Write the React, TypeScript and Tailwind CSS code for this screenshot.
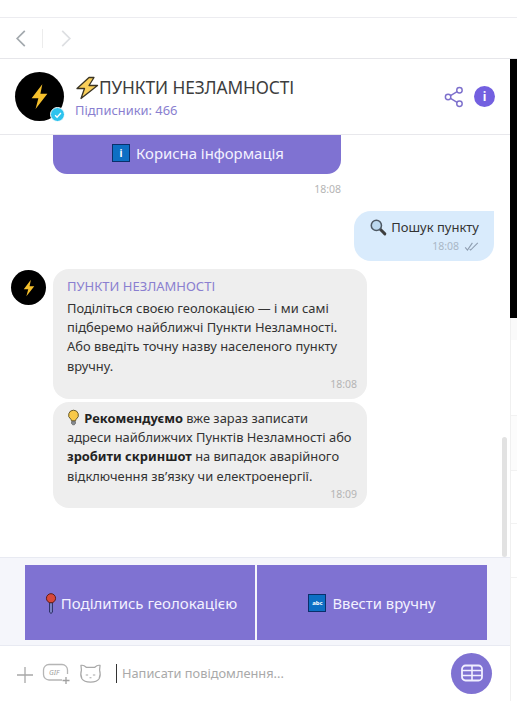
const font = { fontFamily: '"Noto Sans", "Open Sans", sans-serif' };

function Bolt({ className }: { className: string }) {
  return (
    <svg viewBox="0 0 24 24" className={className}>
      <path d="M14.5 1 5 13.5h6L8.5 23 19 9.5h-6.2L14.5 1z" fill="#f5c02c" />
    </svg>
  );
}

function TitleBolt() {
  return (
    <svg viewBox="0 0 24 24" className="w-[24px] h-[24px] shrink-0">
      <path d="M14 1.500 2 12.500h7.500L6 22.500 22.500 9.500H14L19 1.500z" fill="#f9cf5a" stroke="#3a3424" strokeWidth="1.300" strokeLinejoin="round" />
    </svg>
  );
}

function BlueSquare({ label, tiny }: { label: string; tiny?: boolean }) {
  return (
    <span className="w-[18px] h-[18px] bg-[#0d6fc4] border border-[#0a2f6b] flex items-center justify-center shrink-0">
      <span className={tiny ? 'text-[6px] leading-none text-white font-bold' : 'text-[10px] leading-none text-white font-bold'}>{label}</span>
    </span>
  );
}

function GroupAvatar({ big }: { big?: boolean }) {
  return (
    <div className={big ? 'w-[49px] h-[49px] rounded-full bg-black flex items-center justify-center' : 'w-[35px] h-[35px] rounded-full bg-black flex items-center justify-center shrink-0'}>
      <Bolt className={big ? 'w-[27px] h-[27px]' : 'w-[18px] h-[18px]'} />
    </div>
  );
}

function Magnifier() {
  return (
    <svg viewBox="0 0 20 20" className="w-[17px] h-[17px] shrink-0">
      <path d="m11.500 11.500 6 6" stroke="#3f3f3f" strokeWidth="3.400" strokeLinecap="round" />
      <circle cx="7.500" cy="7.500" r="6" fill="#bcd8ee" stroke="#4e5964" strokeWidth="1.800" />
    </svg>
  );
}

function Bulb() {
  return (
    <svg viewBox="0 0 16 20" className="w-[13px] h-[17px] inline-block align-[-3px] mr-[1px]">
      <path d="M8 1a6 6 0 0 0-3.500 10.900c.6.5.9 1.200.9 2.100h5.200c0-.9.3-1.600.9-2.100A6 6 0 0 0 8 1z" fill="#f8c94a" stroke="#4a3d14" strokeWidth="1" />
      <path d="M5.600 15h4.800v2.200L9 19H7l-1.400-1.800z" fill="#8a8f96" stroke="#444" strokeWidth=".7" />
    </svg>
  );
}

function Pin() {
  return (
    <svg viewBox="0 0 12 22" className="w-[12px] h-[21px] shrink-0">
      <path d="M4.600 10h2.800v10.200L6 21.400l-1.400-1.200z" fill="#8b93d8" stroke="#1c2350" strokeWidth="1" />
      <circle cx="6" cy="5.500" r="4.800" fill="#d8483a" stroke="#5b1a14" strokeWidth="1" />
    </svg>
  );
}

function App() {
  return (
    <div style={font} className="w-[517px] h-[701px] bg-white overflow-hidden flex flex-col text-[#333]">
      <div className="h-[18px] border-b border-[#ececf0] shrink-0" />
      <div className="h-[41px] border-b border-[#e6e6ea] shrink-0 flex items-center pl-[15px]">
        <svg viewBox="0 0 12 20" className="w-[12px] h-[19px]">
          <path d="M10 2 2 10l8 8" fill="none" stroke="#a3a9ae" strokeWidth="1.800" />
        </svg>
        <div className="w-px h-[19px] bg-[#ececec] ml-[15px]" />
        <svg viewBox="0 0 12 20" className="w-[12px] h-[19px] ml-[17px]">
          <path d="m2 2 8 8-8 8" fill="none" stroke="#dddfe2" strokeWidth="1.800" />
        </svg>
      </div>

      <div className="flex-1 flex min-h-0">
        <div className="w-[510px] flex flex-col min-h-0">
          <div className="h-[76px] border-b border-[#e8e8ec] shrink-0 flex items-center pl-[15px] pr-[15px]">
            <div className="relative shrink-0 mr-[11px]">
              <GroupAvatar big />
              <div className="absolute right-[-1px] bottom-[-1px] w-[15px] h-[15px] rounded-full bg-[#2dc3ee] border border-white flex items-center justify-center">
                <svg viewBox="0 0 12 12" className="w-[10px] h-[10px]">
                  <path d="m2.500 6.200 2.400 2.400 4.600-5" fill="none" stroke="#fff" strokeWidth="1.600" />
                </svg>
              </div>
            </div>
            <div className="flex-1 min-w-0">
              <div className="flex items-center h-[26px] text-[17.3px] text-[#3d3d3d] tracking-[-0.1px] whitespace-nowrap">
                <TitleBolt />
                <span>ПУНКТИ НЕЗЛАМНОСТІ</span>
              </div>
              <div className="text-[12.9px] leading-[18px] text-[#8a7fd0]">Підписники: 466</div>
            </div>
            <svg viewBox="0 0 22 24" className="w-[20px] h-[22px] mr-[10px] shrink-0">
              <g fill="none" stroke="#7d70cc" strokeWidth="1.600">
                <circle cx="17" cy="4.500" r="3" />
                <circle cx="17" cy="19.500" r="3" />
                <circle cx="4.500" cy="12" r="3" />
                <path d="m7.200 10.400 7.200-4.300M7.200 13.600l7.200 4.300" />
              </g>
            </svg>
            <div className="w-[21px] h-[21px] rounded-full bg-[#7360e0] flex items-center justify-center text-white text-[12px] font-bold shrink-0">i</div>
          </div>

          <div className="relative flex-1 min-h-0 overflow-hidden">
            <div className="ml-[53px] w-[288px] h-[39px] pb-[3px] pl-[2px] bg-[#7f72d2] rounded-b-[14px] flex items-center justify-center gap-[6px] text-[14.9px] text-[#f3f1ff]">
              <BlueSquare label="i" />
              <span>Корисна інформація</span>
            </div>
            <div className="ml-[53px] w-[288px] text-right text-[10.5px] text-[#b5b5b5] mt-[8px] leading-[14px]">18:08</div>

            <div className="mt-[15px] ml-auto mr-[16px] w-[140px] h-[50px] bg-[#d9ebfc] rounded-l-[17px] rounded-br-[17px] pr-[15px] pt-[7px] flex flex-col items-end">
              <div className="flex items-center gap-[4px] text-[13px] leading-[19px] text-[#333]">
                <Magnifier />
                <span>Пошук пункту</span>
              </div>
              <div className="flex items-center gap-[5px] text-[10.5px] leading-[14px] text-[#a9b7c6] mt-[2px]">
                <span>18:08</span>
                <svg viewBox="0 0 16 10" className="w-[15px] h-[9px]">
                  <path d="m1 6 2.500 3L9 1M6 8l1 1 8-8" fill="none" stroke="#8e9db0" strokeWidth="1.200" />
                </svg>
              </div>
            </div>

            <div className="flex mt-[8px] pl-[11px]">
              <div className="mr-[7px] mt-[1px]">
                <GroupAvatar />
              </div>
              <div className="w-[314px]">
                <div className="h-[130px] bg-[#eeeeee] rounded-[16px] px-[14px] pt-[7px]">
                  <div className="text-[13px] leading-[20px] text-[#8a7fd0]">ПУНКТИ НЕЗЛАМНОСТІ</div>
                  <div className="text-[12.9px] leading-[19.2px] mt-[3px] text-[#333] whitespace-nowrap">
                    Поділіться своєю геолокацією — і ми самі<br />
                    підберемо найближчі Пункти Незламності.<br />
                    Або введіть точну назву населеного пункту<br />
                    вручну.
                  </div>
                  <div className="text-right text-[10.5px] leading-[14px] text-[#b5b5b5] mr-[-4px] mt-[1px]">18:08</div>
                </div>
                <div className="h-[106px] bg-[#eeeeee] rounded-[16px] px-[14px] pt-[7px] mt-[3px]">
                  <div className="text-[12.9px] leading-[19.2px] text-[#333] whitespace-nowrap">
                    <Bulb /> <b className="text-[#222]">Рекомендуємо</b> вже зараз записати<br />
                    адреси найближчих Пунктів Незламності або<br />
                    <b className="text-[#222]">зробити скриншот</b> на випадок аварійного<br />
                    відключення зв’язку чи електроенергії.
                  </div>
                  <div className="text-right text-[10.5px] leading-[14px] text-[#b5b5b5] mr-[-4px] mt-[1px]">18:09</div>
                </div>
              </div>
            </div>

            <div className="absolute right-[3px] bottom-0 w-[5px] h-[120px] rounded-full bg-[#e2e2e2]" />
          </div>

          <div className="h-[89px] bg-[#f5f6fb] border-t border-[#e8eaf2] border-b shrink-0 flex items-start pl-[25px] pt-[7px] gap-[2px]">
            <div className="w-[230px] h-[75px] pt-[1px] pl-[2px] bg-[#7f72d2] flex items-center justify-center gap-[4px] text-[15px] text-[#f3f1ff]">
              <Pin />
              <span>Поділитись геолокацією</span>
            </div>
            <div className="w-[230px] h-[75px] pt-[1px] bg-[#7f72d2] flex items-center justify-center gap-[6px] text-[14.8px] text-[#f3f1ff]">
              <BlueSquare label="abc" tiny />
              <span>Ввести вручну</span>
            </div>
          </div>

          <div className="h-[55px] shrink-0 flex items-center pl-[16px] pr-[18px]">
            <svg viewBox="0 0 18 18" className="w-[18px] h-[18px] mt-[3px]">
              <path d="M9 1v16M1 9h16" stroke="#a8a8a8" strokeWidth="1.300" />
            </svg>
            <svg viewBox="0 0 28 22" className="w-[28px] h-[22px] ml-[8px]">
              <path d="M20 17H7a5.500 5.500 0 0 1-5.500-5.500V7A5.500 5.500 0 0 1 7 1.500h13A5.500 5.500 0 0 1 25.500 7v4" fill="none" stroke="#b5b5b5" strokeWidth="1.300" />
              <path d="M24 14v7M20.500 17.500h7" stroke="#a0a0a0" strokeWidth="1.300" />
              <text x="7" y="12" fontSize="7" fontStyle="italic" fill="#9c9c9c">GIF</text>
            </svg>
            <svg viewBox="0 0 24 22" className="w-[23px] h-[21px] ml-[9px]">
              <path d="M2 2.500c2-.5 4 .5 5.500 2h9c1.500-1.500 3.500-2.500 5.500-2l-.5 5c1 3 1 6-.5 9-1.500 2.500-4 3.500-9 3.500s-7.500-1-9-3.500c-1.500-3-1.500-6-.5-9z" fill="none" stroke="#a8a8a8" strokeWidth="1.300" strokeLinejoin="round" />
              <path d="M7 12.500h2.500M14.500 12.500H17M11 15.500h2" stroke="#a8a8a8" strokeWidth="1.100" />
            </svg>
            <div className="w-px h-[19px] bg-[#333] ml-[14px] mr-[5px]" />
            <span className="flex-1 text-[12.8px] text-[#a9a9a9]">Написати повідомлення...</span>
            <div className="w-[41px] h-[41px] rounded-full bg-[#7f72d2] flex items-center justify-center mt-[-1px]">
              <svg viewBox="0 0 22 18" className="w-[22px] h-[18px]">
                <rect x="1" y="1.500" width="20" height="15" rx="3.500" fill="none" stroke="#f1efff" strokeWidth="1.800" />
                <path d="M1 6.500h20M1 11.500h20M11 1.500v15" stroke="#f1efff" strokeWidth="1.600" />
              </svg>
            </div>
          </div>
        </div>

        <div className="flex-1 flex flex-col">
          <div className="h-[259px] bg-black shrink-0" />
          <div className="flex-1 border-l border-[#f0f0f0] flex flex-col">
            <div className="h-[22px] bg-[#fafafa]" />
            <div className="h-[56px] mt-[20px] border-b border-[#f2f2f2]" />
            <div className="h-[55px] bg-[#fcfcfc] border-b border-[#f2f2f2]" />
            <div className="h-[53px] border-b border-[#f2f2f2]" />
            <div className="h-[54px] border-b border-[#f2f2f2]" />
          </div>
        </div>
      </div>
    </div>
  );
}

export default App;
